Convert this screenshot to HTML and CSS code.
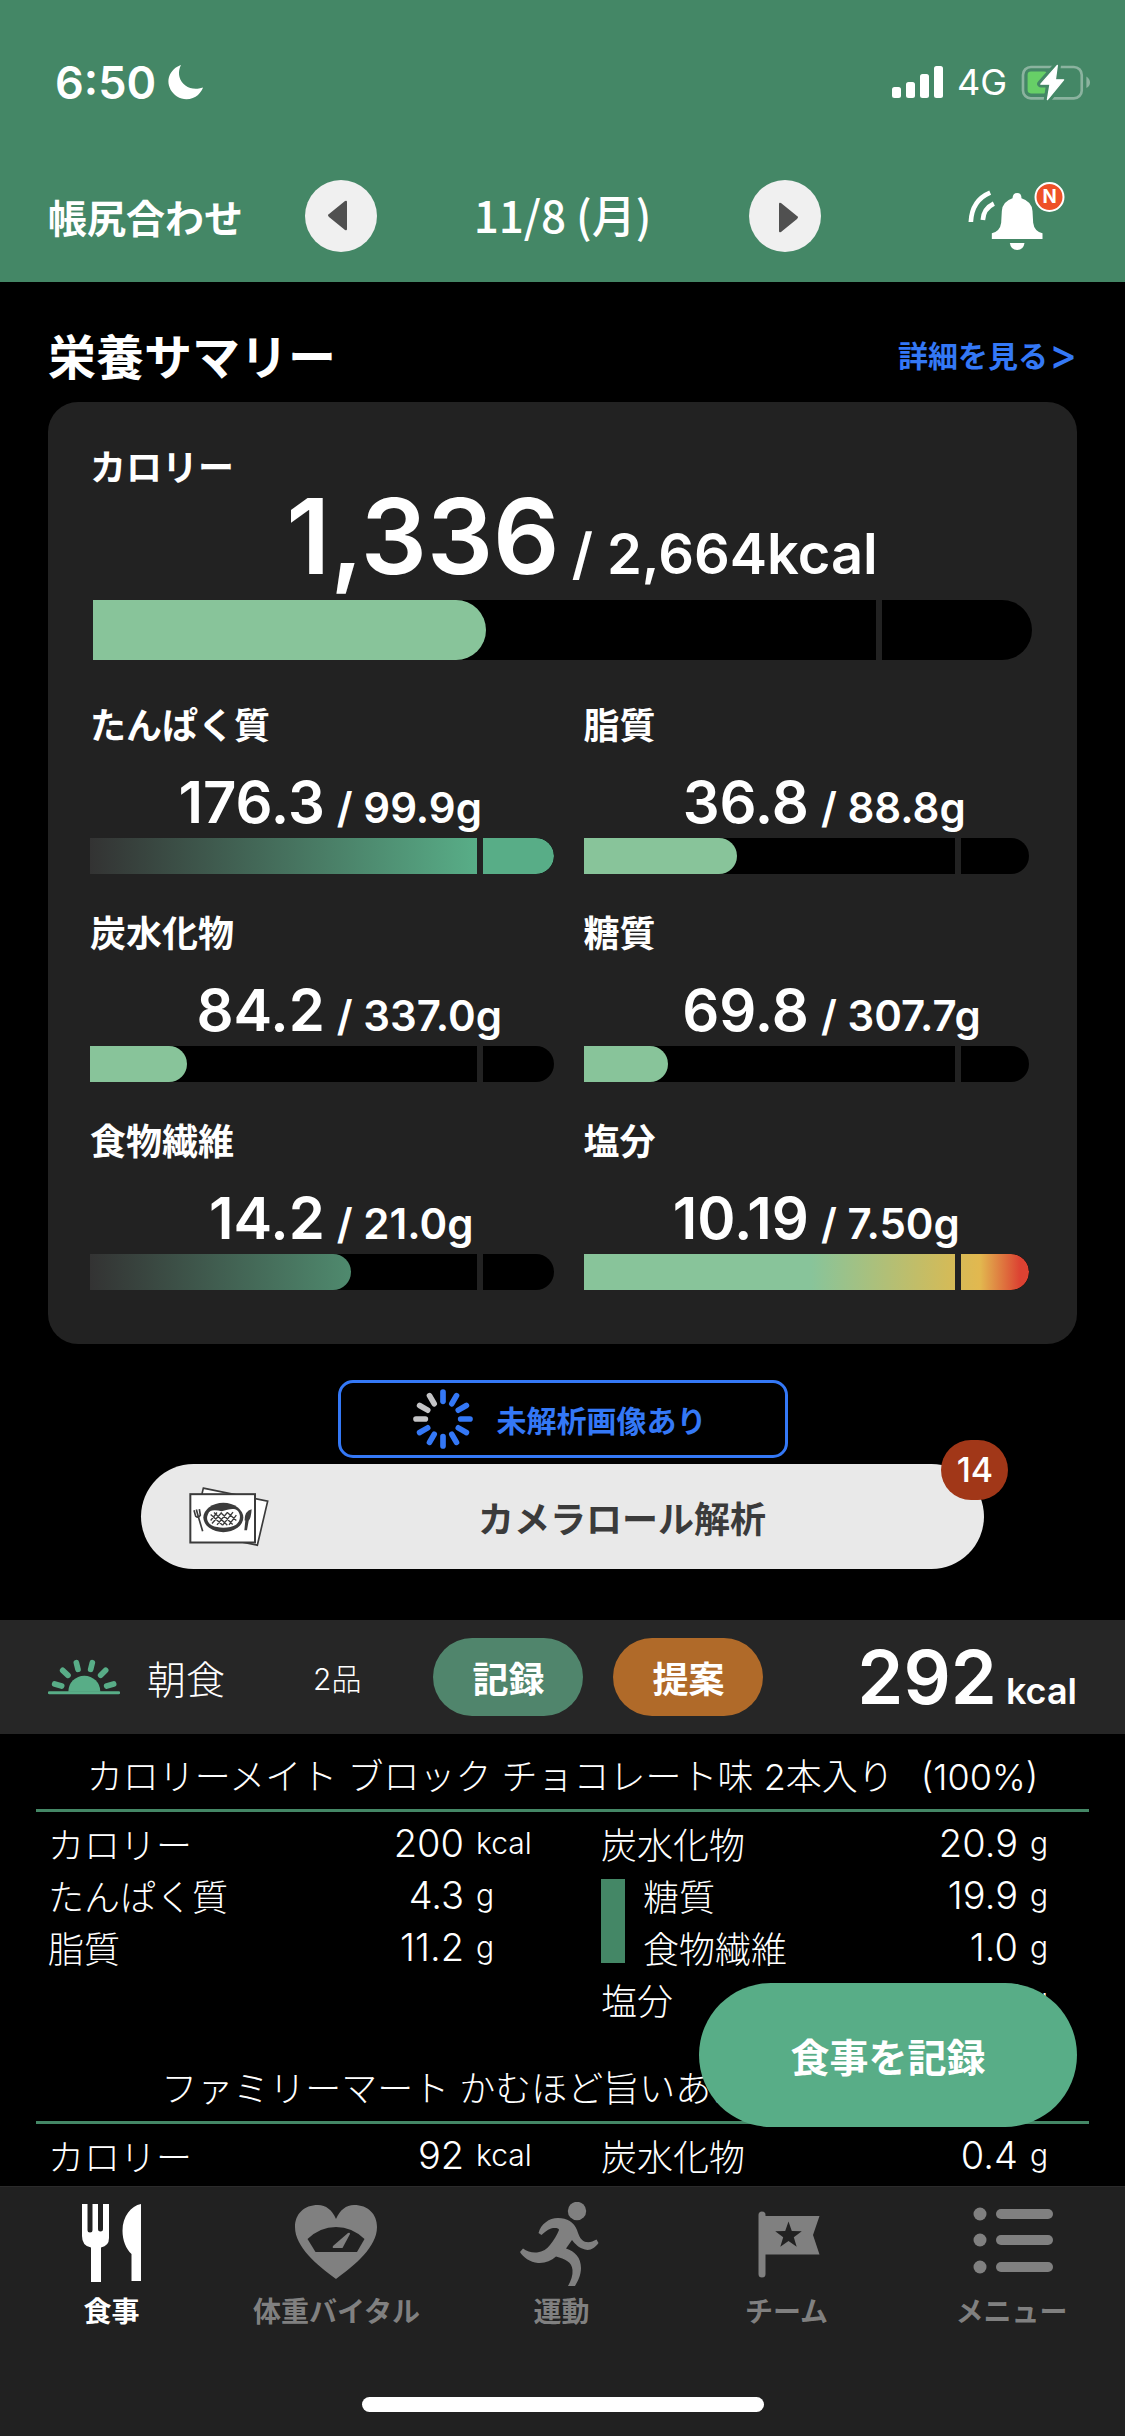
FILE: index.html
```html
<!DOCTYPE html>
<html lang="ja">
<head>
<meta charset="utf-8">
<meta name="viewport" content="width=device-width, initial-scale=1">
<title>食事</title>
<link rel="stylesheet" href="styles.css">
</head>
<body>
<div class="app">
  <header class="header">
    <div class="status">
      <div class="status-left">
        <span class="time">6:50</span>
        <svg class="moon" viewBox="0 0 36 36" aria-hidden="true"><path d="M13 1C11 5 10.500 9 11.500 13C13.500 21 22 26 31 24.500L35 23.500C34.500 25 33 28 30 31C25 35.500 16 37 9 32.500C2 28 -1 20 1 13C3 7 8 2.500 13 1Z" fill="#fff"/></svg>
      </div>
      <div class="status-right">
        <svg class="signal" viewBox="0 0 51 32" aria-hidden="true"><g fill="#fff"><rect y="21" width="9" height="11" rx="2.500"/><rect x="14" y="16" width="9" height="16" rx="2.500"/><rect x="28" y="8" width="9" height="24" rx="2.500"/><rect x="42" width="9" height="32" rx="2.500"/></g></svg>
        <span class="network">4G</span>
        <svg class="battery" viewBox="424 70 212 112" aria-hidden="true">
          <rect x="430" y="79" width="178" height="95" rx="24" fill="none" stroke="#8bb39f" stroke-width="8"/>
          <path d="M622 108Q633 115 633 126T622 143Z" fill="#8bb39f"/>
          <rect x="444" y="93" width="60" height="66" rx="10" fill="#67cf67"/>
          <path d="M534 74L484 130H511L504 178L553 118H528Z" fill="#448766" stroke="#448766" stroke-width="22" stroke-linejoin="round"/>
          <path d="M534 74L484 131H512L504 178L553 118H528Z" fill="#fff" stroke="#fff" stroke-width="4" stroke-linejoin="round"/>
        </svg>
      </div>
    </div>
    <div class="datebar">
      <a class="adjust" href="#">帳尻合わせ</a>
      <div class="stepper">
        <button class="step" type="button" aria-label="前の日"><svg viewBox="0 0 72 72" aria-hidden="true"><path d="M24 34L40 21Q42 20 42 22V49Q42 51 40 50L24 37Q22 35 24 34Z" fill="#505050"/></svg></button>
        <span class="date">11/8 (月)</span>
        <button class="step" type="button" aria-label="次の日"><svg viewBox="0 0 72 72" aria-hidden="true"><path d="M48 36L32 23Q30 22 30 24V51Q30 53 32 52L48 39Q50 37 48 36Z" fill="#505050"/></svg></button>
      </div>
      <button class="bell" type="button" aria-label="お知らせ">
        <svg viewBox="266 420 290 210" aria-hidden="true">
          <path d="M337 594V577Q362 570 365 545L367 510Q369 482 399 472Q400 456 413 456T426 472Q457 482 459 510L461 545Q464 570 489 577V594Z" fill="#fff"/>
          <path d="M391 606H435Q432 627 413 627T391 606Z" fill="#fff"/>
          <path d="M274 543Q277 478 332 455M310 537Q312 503 343 488" fill="none" stroke="#fff" stroke-width="14"/>
          <circle cx="510" cy="468" r="42" fill="#ee5127" stroke="#fff" stroke-width="6"/>
          <text x="510" y="487" text-anchor="middle" class="bell-mark">N</text>
        </svg>
      </button>
    </div>
  </header>

  <div class="stage">
  <main class="content">
    <div class="section-head">
      <h1>栄養サマリー</h1>
      <a class="more" href="#">詳細を見る<span class="more-arrow">&gt;</span></a>
    </div>

    <section class="card">
      <div class="energy">
        <h2 class="label">カロリー</h2>
        <p class="amount amount-large"><span class="now">1,336</span><span class="goal">/ 2,664kcal</span></p>
        <div class="track track-large"><div class="fill" style="width:41.8%"></div></div>
      </div>
      <div class="nutrients">
        <div>
          <h2 class="label">たんぱく質</h2>
          <p class="amount"><span class="now">176.3</span><span class="goal">/ 99.9g</span></p>
          <div class="track"><div class="fill fill-over" style="width:100%"></div></div>
        </div>
        <div>
          <h2 class="label">脂質</h2>
          <p class="amount"><span class="now">36.8</span><span class="goal">/ 88.8g</span></p>
          <div class="track"><div class="fill" style="width:34.5%"></div></div>
        </div>
        <div>
          <h2 class="label">炭水化物</h2>
          <p class="amount"><span class="now">84.2</span><span class="goal">/ 337.0g</span></p>
          <div class="track"><div class="fill" style="width:20.9%"></div></div>
        </div>
        <div>
          <h2 class="label">糖質</h2>
          <p class="amount"><span class="now">69.8</span><span class="goal">/ 307.7g</span></p>
          <div class="track"><div class="fill" style="width:18.9%"></div></div>
        </div>
        <div>
          <h2 class="label">食物繊維</h2>
          <p class="amount"><span class="now">14.2</span><span class="goal">/ 21.0g</span></p>
          <div class="track"><div class="fill fill-rising" style="width:56.3%"></div></div>
        </div>
        <div>
          <h2 class="label">塩分</h2>
          <p class="amount"><span class="now">10.19</span><span class="goal">/ 7.50g</span></p>
          <div class="track"><div class="fill fill-warning" style="width:100%"></div></div>
        </div>
      </div>
    </section>

    <div class="analysis">
      <button class="pending" type="button">
        <svg class="spinner" viewBox="-90 -90 180 180" aria-hidden="true">
          <g stroke="#3478f6" stroke-width="17" stroke-linecap="round">
            <path d="M0-53V-81"/><path d="M0-53V-81" transform="rotate(30)"/><path d="M0-53V-81" transform="rotate(60)"/><path d="M0-53V-81" transform="rotate(90)"/><path d="M0-53V-81" transform="rotate(120)"/><path d="M0-53V-81" transform="rotate(150)"/><path d="M0-53V-81" transform="rotate(180)"/><path d="M0-53V-81" transform="rotate(210)"/><path d="M0-53V-81" transform="rotate(240)"/>
            <g stroke="#c4c4c6"><path d="M0-53V-81" transform="rotate(270)"/><path d="M0-53V-81" transform="rotate(300)"/><path d="M0-53V-81" transform="rotate(330)"/></g>
          </g>
        </svg>
        未解析画像あり
      </button>
      <button class="camera" type="button">
        <svg class="photos" viewBox="26 318 240 182" aria-hidden="true">
          <g stroke="#3b3b3b" fill="#fff">
            <path d="M69 324L262 363L231 495L38 456Z" stroke-width="5"/>
            <rect x="30" y="342" width="194" height="145" stroke-width="6"/>
          </g>
          <ellipse cx="129" cy="412" rx="60" ry="44" fill="#3b3b3b"/>
          <path d="M83 402C88 386 108 390 124 393C142 390 158 381 171 391C183 402 181 424 167 434C149 445 113 445 95 436C80 428 77 414 83 402Z" fill="#fff"/>
          <path d="M91 403l36 32M101 397l40 38M121 397l36 36M141 397l27 24M91 421l19-24M95 430l29-33M110 434l31-37M127 435l31-39M146 434l22-29" fill="none" stroke="#3b3b3b" stroke-width="4"/>
          <path d="M54 410L67 453M41 390l5 18q8 8 14-3l-3-18M48 388l6 22" fill="none" stroke="#3b3b3b" stroke-width="5"/>
          <path d="M214 387Q192 392 193 421H195L192 450H200L205 422Q212 414 214 387Z" fill="#3b3b3b"/>
        </svg>
        <span class="camera-text">カメラロール解析</span>
        <span class="count-badge">14</span>
      </button>
    </div>

    <section class="meal">
      <div class="meal-head">
        <svg class="sunrise" viewBox="24 48 216 108" aria-hidden="true">
          <path d="M85 146A48 48 0 0 1 181 146Z" fill="#58ad87"/>
          <path d="M28 149H236" stroke="#58ad87" stroke-width="9" stroke-linecap="round"/>
          <path d="M44 123L65 129M68 82L84 97M109 59L114 79M157 59L152 79M197 82L182 97M221 123L200 129" stroke="#58ad87" stroke-width="17" stroke-linecap="round"/>
        </svg>
        <h2 class="meal-name">朝食</h2>
        <span class="meal-count">2品</span>
        <div class="meal-actions">
          <button class="pill pill-record" type="button">記録</button>
          <button class="pill pill-suggest" type="button">提案</button>
        </div>
        <p class="meal-total">292<span class="meal-unit">kcal</span></p>
      </div>

      <article class="food">
        <h3 class="food-title"><span>カロリーメイト ブロック チョコレート味 2本入り</span><span>(100%)</span></h3>
        <div class="facts">
          <table class="fact-table">
            <tr><th scope="row">カロリー</th><td class="num">200</td><td class="unit">kcal</td></tr>
            <tr><th scope="row">たんぱく質</th><td class="num">4.3</td><td class="unit">g</td></tr>
            <tr><th scope="row">脂質</th><td class="num">11.2</td><td class="unit">g</td></tr>
          </table>
          <table class="fact-table fact-table-right">
            <tr><th scope="row" colspan="2">炭水化物</th><td class="num">20.9</td><td class="unit">g</td></tr>
            <tr><td class="group" rowspan="2"><div class="group-bar"></div></td><th scope="row">糖質</th><td class="num">19.9</td><td class="unit">g</td></tr>
            <tr><th scope="row">食物繊維</th><td class="num">1.0</td><td class="unit">g</td></tr>
            <tr><th scope="row" colspan="2">塩分</th><td class="num">0.2</td><td class="unit">g</td></tr>
          </table>
        </div>
      </article>

      <article class="food">
        <h3 class="food-title"><span>ファミリーマート かむほど旨いあたりめ</span><span>(100%)</span></h3>
        <div class="facts">
          <table class="fact-table">
            <tr><th scope="row">カロリー</th><td class="num">92</td><td class="unit">kcal</td></tr>
          </table>
          <table class="fact-table fact-table-right">
            <tr><th scope="row" colspan="2">炭水化物</th><td class="num">0.4</td><td class="unit">g</td></tr>
          </table>
        </div>
      </article>
    </section>
  </main>
  <button class="fab" type="button">食事を記録</button>
  </div>

  <nav class="tabbar">
    <div class="tabs">
      <a class="tab tab-active" href="#" aria-current="page">
        <svg viewBox="0 0 90 86" aria-hidden="true"><path fill="currentColor" d="M15 2h5.500v26q0 2.500 2.500 2.500t2.500-2.500V2H31v25q0 2.500 2.500 2.500T36 27V2h6v34q0 8-8 9.500V80H24V45.500Q15 44 15 34ZM74 2V79H64.500V52C59 47 55.500 38 55.500 29C55.500 14 64 4 74 2Z"/></svg>
        <span>食事</span>
      </a>
      <a class="tab" href="#">
        <svg viewBox="0 0 90 86" aria-hidden="true"><path fill="currentColor" d="M44 17C40 8 34 3 26 3C12 3 3 12 3 25C3 45 25 63 44 77C63 63 85 45 85 25C85 12 76 3 62 3C54 3 48 8 44 17Z"/><path fill="#212121" d="M15.500 37Q28 25 44 25T72.500 37L65 50H23.500Z"/><path fill="currentColor" d="M56 31Q58 30 58 32L50.500 46H42Q40 46 41 44Z"/></svg>
        <span>体重バイタル</span>
      </a>
      <a class="tab" href="#">
        <svg viewBox="0 0 90 86" aria-hidden="true"><circle fill="currentColor" cx="60" cy="9" r="9.200"/><path fill="currentColor" d="M21.500 31C24 22 32 16 41 16C50 16 57 20 60 28C62 34 64 39 69 40C73 40.500 76 39.500 79.500 37.500L81.500 41C78 46 73 49 68 47.500C62 46 58 42 55 38L49 46.500C58 49 64 56 64 66C64 73 61 79 58 84H51C54 79 56 73 55.500 68C55 60 48 57 39 54.500C34 59 28 61.500 21 61C13 60.500 6 55 3 50L6 46.500C10 49.500 15 51 20 50.500C26 49.500 30 47 33 43C37 38 40 33 42 28C42 26 38 25.500 34 26.500C30 28 27 31 24.500 33Z"/></svg>
        <span>運動</span>
      </a>
      <a class="tab" href="#">
        <svg viewBox="0 0 90 86" aria-hidden="true"><path stroke="currentColor" stroke-width="7" stroke-linecap="round" d="M20 13V72"/><path fill="currentColor" d="M22 14H77.500L71 33L77.500 52.500H22Z"/><path fill="#212121" d="M46.500 19.500L49.800 29L59.800 29.200L51.800 35.200L54.700 44.800L46.500 39.100L38.300 44.800L41.200 35.200L33.200 29.200L43.200 29Z"/></svg>
        <span>チーム</span>
      </a>
      <a class="tab" href="#">
        <svg viewBox="0 0 90 86" aria-hidden="true"><g fill="currentColor"><circle cx="13" cy="12" r="6.500"/><circle cx="13" cy="38" r="6.500"/><circle cx="13" cy="65" r="6.500"/><rect x="29" y="7" width="57" height="10" rx="5"/><rect x="29" y="33" width="57" height="10" rx="5"/><rect x="29" y="60" width="57" height="10" rx="5"/></g></svg>
        <span>メニュー</span>
      </a>
    </div>
    <div class="home-indicator"></div>
  </nav>
</div>
</body>
</html>
```
FILE: styles.css
```css
:root {
  --green: #448766;
  --mint: #58ad87;
  --light-green: #88c49a;
  --surface: #222222;
  --blue: #3478f6;
  --jp: "Noto Sans CJK JP", sans-serif;
  --latin: Inter, "Noto Sans CJK JP", sans-serif;
}

* {
  box-sizing: border-box;
}

body {
  margin: 0;
  background: #000;
  color: #fff;
  font-family: var(--latin);
}

h1, h2, h3, p {
  margin: 0;
  font-weight: 500;
}

a {
  color: inherit;
  text-decoration: none;
}

button {
  margin: 0;
  padding: 0;
  border: 0;
  background: none;
  color: inherit;
  font: inherit;
  cursor: pointer;
}

svg {
  display: block;
  flex: none;
}

.app {
  display: flex;
  flex-direction: column;
  height: 100vh;
}

/* Header */
.header {
  padding-bottom: 16px;
  background: var(--green);
}

.status {
  display: flex;
  align-items: center;
  justify-content: space-between;
  height: 166px;
  padding: 0 34px 2px 55px;
}

.status-left,
.status-right {
  display: flex;
  align-items: center;
}

.status-left {
  gap: 12px;
}

.status-right {
  gap: 14px;
}

.time {
  font-size: 45px;
  font-weight: 600;
}

.moon {
  width: 36px;
  height: 36px;
}

.signal {
  width: 51px;
  height: 32px;
}

.network {
  font-size: 36px;
  font-weight: 400;
}

.battery {
  width: 70px;
  height: 37px;
}

.datebar {
  display: grid;
  grid-template-columns: 1fr auto 1fr;
  align-items: center;
  height: 100px;
  padding: 0 60px 0 48px;
}

.adjust {
  font-size: 39px;
  font-weight: 700;
  white-space: nowrap;
}

.stepper {
  display: flex;
  align-items: center;
  margin-left: 12px;
}

.step {
  width: 72px;
  height: 72px;
  border-radius: 50%;
  background: #f0f0f0;
}

.date {
  width: 372px;
  padding-bottom: 4px;
  font-family: var(--jp);
  font-size: 44px;
  font-weight: 500;
  text-align: center;
}

.bell {
  justify-self: end;
}

.bell svg {
  width: 97px;
  height: 70px;
}

.bell-mark {
  fill: #fff;
  font: 700 56px Inter, sans-serif;
}

/* Scrolling content */
.stage {
  position: relative;
  flex: 1;
  min-height: 0;
}

.content {
  height: 100%;
  overflow-y: auto;
  scrollbar-width: none;
}

.section-head {
  display: flex;
  align-items: center;
  justify-content: space-between;
  height: 120px;
  padding: 24px 48px 0;
}

.section-head h1 {
  font-size: 48px;
  font-weight: 700;
}

.more {
  display: flex;
  align-items: center;
  gap: 1px;
  color: var(--blue);
  font-size: 30px;
  font-weight: 700;
}

.more-arrow {
  font-size: 42px;
  font-weight: 500;
  line-height: 36px;
}

/* Nutrition card */
.card {
  margin: 0 48px;
  padding: 45px 0 54px;
  border-radius: 30px;
  background: var(--surface);
}

.energy {
  padding: 0 45px 0 42px;
}

.nutrients {
  display: grid;
  grid-template-columns: 51fr 49fr;
  gap: 39px 30px;
  padding: 45px 48px 0 42px;
}

.label {
  font-size: 36px;
  font-weight: 700;
  line-height: 42px;
}

.amount {
  display: grid;
  grid-template-columns: 52fr 48fr;
  align-items: baseline;
  column-gap: 12px;
  margin: 21px 0 2px;
  font-weight: 600;
  white-space: nowrap;
}

.now {
  font-size: 58px;
  line-height: 68px;
  text-align: right;
}

.goal {
  font-size: 42px;
  line-height: 42px;
}

.amount-large {
  grid-template-columns: 101fr 99fr;
  margin: 0 0 17px;
}

.amount-large .now {
  font-size: 104px;
  line-height: 94px;
}

.amount-large .goal {
  font-size: 56px;
  line-height: 58px;
}

.track {
  position: relative;
  height: 36px;
  border-radius: 0 18px 18px 0;
  background: #000;
  overflow: hidden;
}

.track-large {
  height: 60px;
  margin-left: 3px;
  border-radius: 0 30px 30px 0;
}

/* Notch that marks the daily goal */
.track::after {
  content: "";
  position: absolute;
  top: 0;
  bottom: 0;
  left: 83.4%;
  width: 6px;
  background: var(--surface);
}

.fill {
  height: 100%;
  border-radius: inherit;
  background: var(--light-green);
}

.fill-over {
  background: linear-gradient(90deg, #333333, var(--mint) 83%);
}

.fill-rising {
  background: linear-gradient(90deg, #333333, #4f8a6e);
}

.fill-warning {
  background: linear-gradient(90deg, var(--light-green) 51%, #d3bb59 82%, #e2b84f 89%, #dc4232 98%);
}

/* Photo analysis */
.analysis {
  display: flex;
  flex-direction: column;
  align-items: center;
  gap: 6px;
  padding: 36px 0 51px;
}

.pending {
  display: flex;
  align-items: center;
  justify-content: center;
  gap: 24px;
  width: 40%;
  height: 78px;
  padding-right: 6px;
  border: 3px solid var(--blue);
  border-radius: 15px;
  color: var(--blue);
  font-size: 30px;
  font-weight: 700;
}

.spinner {
  width: 60px;
  height: 60px;
}

.camera {
  position: relative;
  display: flex;
  align-items: center;
  width: 75%;
  height: 105px;
  padding: 0 9px 0 48px;
  border-radius: 53px;
  background: #e9e9e9;
  color: #3b3b3b;
  font-size: 36px;
  font-weight: 700;
}

.photos {
  width: 80px;
  height: 61px;
}

.camera-text {
  flex: 1;
  text-align: center;
}

.count-badge {
  position: absolute;
  top: -24px;
  right: -24px;
  min-width: 67px;
  border-radius: 30px;
  background: #a13718;
  color: #fff;
  font-size: 34px;
  font-weight: 500;
  line-height: 60px;
  text-align: center;
}

/* Meal */
.meal-head {
  display: flex;
  align-items: center;
  height: 114px;
  padding: 0 48px;
  background: #262626;
}

.sunrise {
  width: 72px;
  height: 36px;
}

.meal-name {
  margin-left: 27px;
  font-size: 39px;
  font-weight: 300;
}

.meal-count {
  margin-left: 88px;
  font-size: 30px;
  font-weight: 300;
}

.meal-actions {
  display: flex;
  gap: 30px;
  margin-left: 72px;
}

.pill {
  width: 150px;
  height: 78px;
  border-radius: 39px;
  font-size: 36px;
  font-weight: 700;
}

.pill-record {
  background: #50856c;
}

.pill-suggest {
  background: #b06a29;
}

.meal-total {
  display: flex;
  align-items: baseline;
  gap: 9px;
  margin-left: auto;
  font-size: 74px;
  font-weight: 600;
  white-space: nowrap;
}

.meal-unit {
  font-size: 36px;
}

.food {
  margin-bottom: 21px;
}

.food-title {
  display: flex;
  justify-content: center;
  gap: 27px;
  margin: 0 36px 5px;
  padding-top: 11px;
  border-bottom: 3px solid var(--green);
  font-size: 36px;
  font-weight: 300;
  line-height: 64px;
  white-space: nowrap;
}

.facts {
  display: grid;
  grid-template-columns: 43fr 37fr;
  align-items: start;
  padding: 0 48px;
}

.fact-table {
  width: 100%;
  border-collapse: collapse;
  font-family: var(--jp);
  font-size: 36px;
  font-weight: 300;
  line-height: 52px;
}

.fact-table th,
.fact-table td {
  height: 52px;
  padding: 0;
  font-weight: 300;
  text-align: left;
  white-space: nowrap;
}

.fact-table .num {
  font-family: var(--latin);
  font-size: 38px;
  text-align: right;
}

.fact-table .unit {
  width: 137px;
  padding-left: 12px;
  font-family: var(--latin);
  font-size: 30px;
}

.fact-table-right .unit {
  width: 59px;
}

.fact-table .group {
  width: 42px;
}

.group-bar {
  width: 24px;
  height: 84px;
  background: var(--green);
}

.fab {
  position: absolute;
  right: 48px;
  bottom: 59px;
  width: 378px;
  height: 144px;
  border-radius: 72px;
  background: var(--mint);
  font-size: 39px;
  font-weight: 700;
}

/* Tab bar */
.tabbar {
  padding: 15px 0 24px;
  border-top: 1px solid #2b2b2b;
  background: #212121;
}

.tabs {
  display: grid;
  grid-template-columns: repeat(5, 1fr);
}

.tab {
  display: flex;
  flex-direction: column;
  align-items: center;
  gap: 4px;
  padding-right: 2px;
  color: #808080;
  font-size: 28px;
  font-weight: 700;
  line-height: 40px;
}

.tab svg {
  width: 90px;
  height: 86px;
}

.tab-active {
  color: #fff;
}

.home-indicator {
  width: 402px;
  height: 15px;
  margin: 65px auto 0;
  border-radius: 8px;
  background: #fff;
}
```
